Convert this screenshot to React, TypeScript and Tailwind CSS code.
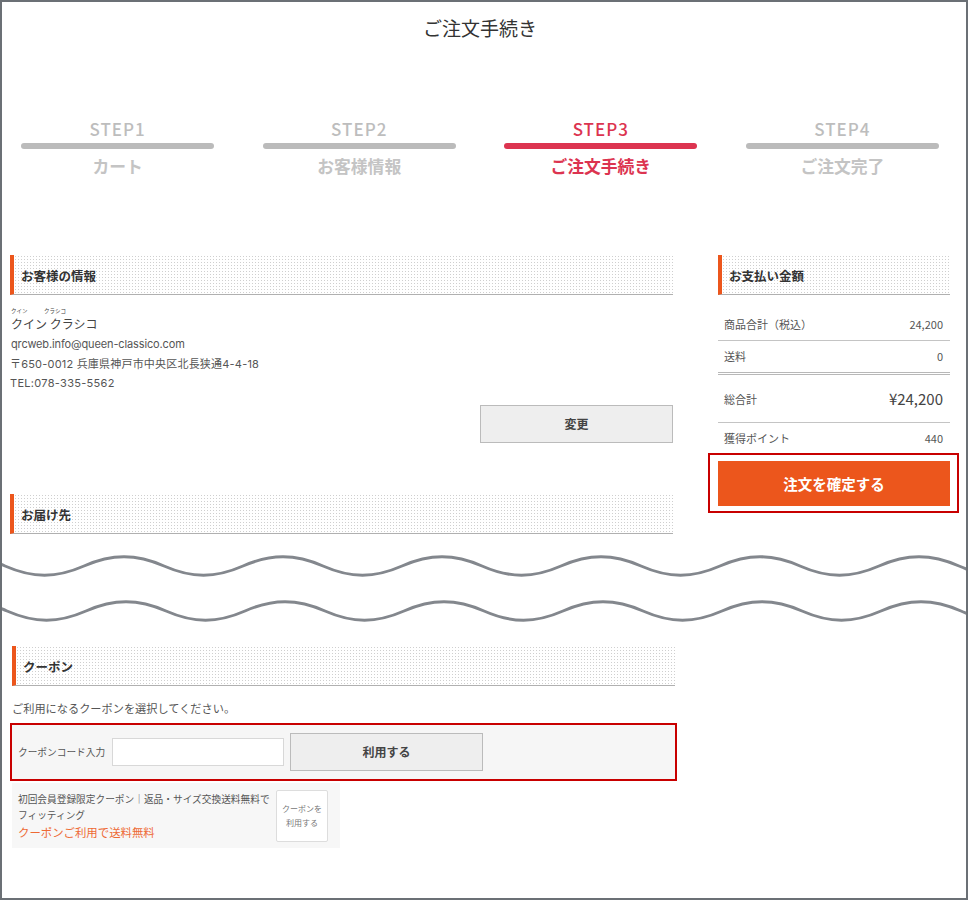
const font = { jp: "font-['Noto_Sans_CJK_JP','Noto_Sans',sans-serif]" };

const steps = [
  { num: "STEP1", label: "カート", active: false },
  { num: "STEP2", label: "お客様情報", active: false },
  { num: "STEP3", label: "ご注文手続き", active: true },
  { num: "STEP4", label: "ご注文完了", active: false },
];

const SectionHead = ({ title }: { title: string }) => (
  <div className="h-10 flex items-center pl-[7px] pt-[3px] border-l-4 border-l-[#ec561c] border-b border-b-[#b0b0b0] bg-[radial-gradient(#cfcfcf_1px,transparent_1px)] bg-[length:3px_3px]">
    <h2 className="text-[12.5px] font-bold text-[#333] leading-none">{title}</h2>
  </div>
);

const Wave = ({ offset }: { offset: number }) => {
  // one long sine-like line, period 159px
  let d = `M${offset - 159 * 2} 14`;
  for (let i = 0; i < 10; i++) {
    const x = offset - 159 * 2 + i * 159;
    d += ` C${x + 28} 1.7 ${x + 52} 1.7 ${x + 80} 14 S${x + 131} 26.3 ${x + 159} 14`;
  }
  return (
    <svg width="964" height="28" viewBox="0 0 964 28" className="block">
      <path d={d} fill="none" stroke="#83878d" strokeWidth="3" />
    </svg>
  );
};

const PayRow = ({ label, value, big }: { label: string; value: string; big?: boolean }) => (
  <div className="flex items-center justify-between pl-[6px] pr-[7px] h-full">
    <span className="text-[11px] text-[#555]">{label}</span>
    <span className={big ? "text-[15px] text-[#444]" : "text-[11px] text-[#555]"}>{value}</span>
  </div>
);

export default function App() {
  return (
    <div className={`h-[900px] w-[968px] border-2 border-[#6b7075] bg-white overflow-hidden ${font.jp}`}>
      <h1 className="text-[19px] leading-none text-center text-[#333] mt-4 h-[20px] -translate-x-[4px]">ご注文手続き</h1>

      {/* Steps */}
      <div className="flex gap-[48.3px] pl-[19px] pr-[27px] mt-[81px]">
        {steps.map((s) => (
          <div key={s.num} className="flex-1 text-center">
            <p className={`text-[17px] font-medium leading-[20px] tracking-[1px] ${s.active ? "text-[#dc3450]" : "text-[#bdbdbd]"}`}>{s.num}</p>
            <div className={`h-[6px] rounded-full mt-[4px] ${s.active ? "bg-[#dc3450]" : "bg-[#bbbbbb]"}`} />
            <p className={`text-[16.8px] font-bold leading-[20px] mt-[7px] ${s.active ? "text-[#dc3450]" : "text-[#c4c4c4]"}`}>{s.label}</p>
          </div>
        ))}
      </div>

      {/* Upper columns */}
      <div className="flex pl-2 mt-[79px]">
        <div className="w-[663px]">
          <SectionHead title="お客様の情報" />
          <div className="text-[#555] text-[11px] font-['Inter','Noto_Sans_CJK_JP',sans-serif]">
            <p className="text-[12px] leading-[20px] mt-[12px] ml-[1px] text-[#444] font-['Noto_Sans_CJK_JP',sans-serif]">
              <ruby className="[ruby-align:start]">
                クイン クラシコ
                <rt className="text-[5.5px] leading-[7px] pb-[3px] whitespace-pre">クイン　　　クラシコ</rt>
              </ruby>
            </p>
            <p className="leading-[20px] ml-[1px] tracking-[-0.13px]">qrcweb.info@queen-classico.com</p>
            <p className="leading-[20px] tracking-[0.2px]">〒650-0012 兵庫県神戸市中央区北長狭通4-4-18</p>
            <p className="leading-[19px] tracking-[0.3px]">TEL:078-335-5562</p>
          </div>
          <div className="flex justify-end mt-[12px]">
            <button className="w-[193px] h-[38px] bg-[#eeeeee] border border-[#bbbbbb] text-[12px] font-bold text-[#444]">変更</button>
          </div>
          <div className="mt-[51px]">
            <SectionHead title="お届け先" />
          </div>
        </div>

        <div className="w-[232px] ml-[45px]">
          <SectionHead title="お支払い金額" />
          <div className="h-[46px] border-b border-[#c4c4c4] pt-[13px]"><PayRow label="商品合計（税込）" value="24,200" /></div>
          <div className="h-[34px] border-b-[3px] border-double border-[#b8b8b8]"><PayRow label="送料" value="0" /></div>
          <div className="h-[48px] border-b border-[#c4c4c4] pt-[2px]"><PayRow label="総合計" value="¥24,200" big /></div>
          <div className="h-[30px]"><PayRow label="獲得ポイント" value="440" /></div>
          <div className="-ml-[10px] w-[251px] border-2 border-[#c80000] pl-2 pt-[6px] pb-[5px]">
            <button className="block w-[232px] h-[45px] bg-[#ec561c] text-white text-[14.5px] font-bold">注文を確定する</button>
          </div>
        </div>
      </div>

      {/* Page cut */}
      <div className="mt-[18px] flex flex-col gap-[16.5px]">
        <Wave offset={-77} />
        <Wave offset={-75} />
      </div>

      {/* Coupon */}
      <div className="pl-2 mt-[21.5px]">
        <div className="w-[663px] ml-[2px]">
          <SectionHead title="クーポン" />
        </div>
        <p className="text-[11.2px] leading-[16px] text-[#555] ml-[2px] mt-[14px]">ご利用になるクーポンを選択してください。</p>
        <div className="w-[667px] h-[58px] mt-[7px] border-2 border-[#c80000] bg-[#f6f6f6] flex items-center pl-[6px]">
          <span className="text-[9.7px] text-[#555] w-[94px]">クーポンコード入力</span>
          <input className="w-[172px] h-[28px] bg-white border border-[#d8d8d8]" />
          <button className="w-[193px] h-[38px] ml-[6px] bg-[#eeeeee] border border-[#bbbbbb] text-[12px] font-bold text-[#444]">利用する</button>
        </div>
        <div className="w-[328px] h-[65px] ml-[2px] mt-[2px] bg-[#f7f7f7] flex items-center pl-[6px]">
          <div className="w-[258px]">
            <p className="text-[9.7px] leading-[16px] text-[#555] whitespace-nowrap">初回会員登録限定クーポン｜返品・サイズ交換送料無料で</p>
            <p className="text-[9.7px] leading-[16px] text-[#555]">フィッティング</p>
            <p className="text-[11.4px] leading-[18px] text-[#ee6a35]">クーポンご利用で送料無料</p>
          </div>
          <button className="w-[52px] h-[52px] bg-white border border-[#dddddd] rounded-[2px] text-[8px] leading-[14px] text-[#777]">クーポンを<br />利用する</button>
        </div>
      </div>
    </div>
  );
}
